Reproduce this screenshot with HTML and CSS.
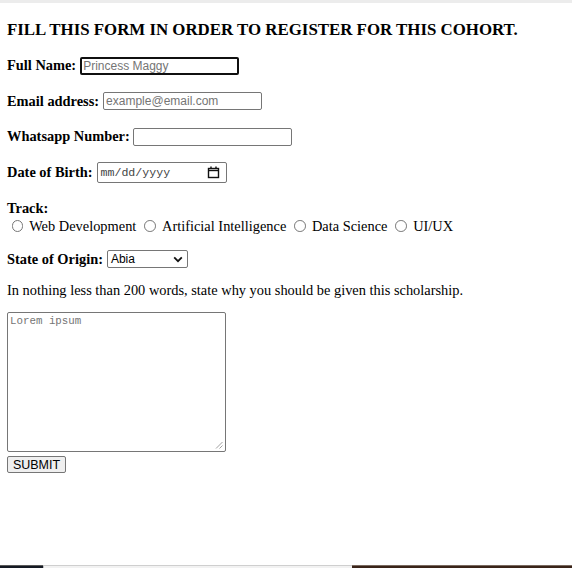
FILE: index.html
```html
<!DOCTYPE html>
<html lang="en">
<head>
<meta charset="utf-8">
<title>Cohort Registration</title>
<link rel="stylesheet" href="styles.css">
</head>
<body>
<div class="topbar"></div>
<main class="content">
  <h3 class="title">FILL THIS FORM IN ORDER TO REGISTER FOR THIS COHORT.</h3>
  <form class="form">
    <p class="row row-first"><label class="lbl" for="name">Full Name:</label> <input class="field field-focus" id="name" type="text" placeholder="Princess Maggy"></p>
    <p class="row"><label class="lbl" for="email">Email address:</label> <input class="field" id="email" type="email" placeholder="example@email.com"></p>
    <p class="row"><label class="lbl lbl-tight" for="phone">Whatsapp Number:</label> <input class="field" id="phone" type="tel"></p>
    <p class="row"><label class="lbl" for="dob">Date of Birth:</label> <span class="date"><span class="date-text">mm/dd/yyyy</span><svg class="cal" width="13" height="13" viewBox="0 0 13 13"><rect x="1.5" y="2.5" width="10" height="9" fill="none" stroke="#111" stroke-width="1.4"/><line x1="1.5" y1="4.5" x2="11.5" y2="4.5" stroke="#111" stroke-width="1.4"/><line x1="4" y1="0.5" x2="4" y2="2.5" stroke="#111" stroke-width="1.4"/><line x1="9" y1="0.5" x2="9" y2="2.5" stroke="#111" stroke-width="1.4"/></svg></span></p>
    <div class="track">
      <div class="lbl">Track:</div>
      <div class="radios">
        <label class="opt"><span class="radio"></span>Web Development</label>
        <label class="opt"><span class="radio"></span>Artificial Intelligence</label>
        <label class="opt"><span class="radio"></span>Data Science</label>
        <label class="opt"><span class="radio"></span>UI/UX</label>
      </div>
    </div>
    <p class="row"><label class="lbl" for="state">State of Origin:</label> <span class="select"><span class="select-text">Abia</span><svg class="chev" width="10" height="7" viewBox="0 0 10 7"><path d="M1.2 1.4 L5 5.2 L8.8 1.4" fill="none" stroke="#111" stroke-width="1.8"/></svg></span></p>
    <p class="row plain">In nothing less than 200 words, state why you should be given this scholarship.</p>
    <div class="area"><span class="area-ph">Lorem ipsum</span><svg class="grip" width="8" height="8" viewBox="0 0 8 8"><line x1="7.5" y1="1" x2="1" y2="7.5" stroke="#888" stroke-width="0.8"/><line x1="7.5" y1="4.5" x2="4.5" y2="7.5" stroke="#888" stroke-width="0.8"/></svg></div>
    <div class="actions"><span class="btn">SUBMIT</span></div>
  </form>
</main>
<div class="bottombar">
  <span class="seg seg-dark"></span>
  <span class="seg seg-light"></span>
  <span class="seg seg-brown"></span>
</div>
</body>
</html>
```
FILE: styles.css
```css
html, body { margin: 0; padding: 0; }
body {
  font-family: "Liberation Serif", "Times New Roman", serif;
  font-size: 14.4px;
  color: #000;
  background: #fff;
  display: flex;
  flex-direction: column;
  min-height: 568px;
}
.topbar { height: 3px; background: #ececec; flex: none; }
.content { flex: 1; padding: 0 7px; }
.title {
  font-size: 16.85px;
  font-weight: bold;
  margin: 17px 0 0;
  line-height: 19px;
}
.form { display: block; }
.row {
  margin: 14.4px 0 0;
  display: flex;
  align-items: center;
  min-height: 21px;
}
.row-first { margin-top: 16.4px; }
.row.plain { display: block; line-height: 17px; min-height: 0; margin-top: 12px; }
.lbl { font-weight: bold; margin-right: 4px; }
.lbl-tight { margin-right: 3px; }
.field {
  box-sizing: border-box;
  width: 159px;
  height: 18px;
  border: 1px solid #767676;
  border-radius: 2px;
  padding: 0 2px;
  font-family: "Liberation Sans", Arial, sans-serif;
  font-size: 12px;
  color: #000;
  background: #fff;
  outline: none;
}
.field::placeholder { color: #757575; }
.field-focus { border: 2px solid #101010; padding: 0 1px; }
.date {
  box-sizing: border-box;
  width: 130px;
  height: 21px;
  border: 1px solid #767676;
  border-radius: 2px;
  display: flex;
  align-items: center;
  justify-content: space-between;
  padding: 0 6px 0 3px;
}
.date-text { font-family: "Liberation Mono", monospace; font-size: 11.6px; color: #444; }
.cal { display: block; }
.track { margin-top: 17px; }
.track .lbl { line-height: 17px; }
.radios { display: flex; align-items: center; line-height: 17px; margin-top: 1px; }
.opt { display: inline-flex; align-items: center; margin-right: 3.5px; }
.radio {
  box-sizing: border-box;
  width: 11.7px;
  height: 11.7px;
  border: 1px solid #767676;
  border-radius: 50%;
  margin: 0 6px 0 4.5px;
  background: #fff;
}
.select {
  box-sizing: border-box;
  width: 81px;
  height: 18px;
  border: 1px solid #767676;
  border-radius: 2px;
  display: flex;
  align-items: center;
  justify-content: space-between;
  padding: 0 4px 0 3px;
}
.select-text { font-family: "Liberation Sans", Arial, sans-serif; font-size: 12px; }
.chev { display: block; }
.area {
  box-sizing: border-box;
  width: 219px;
  height: 140px;
  margin-top: 13px;
  border: 1px solid #767676;
  border-radius: 2px;
  padding: 2px 2px;
  display: flex;
  flex-direction: column;
  justify-content: space-between;
}
.area-ph { font-family: "Liberation Mono", monospace; font-size: 10.8px; color: #757575; line-height: 13px; }
.grip { align-self: flex-end; display: block; }
.actions { margin-top: 4px; }
.btn {
  box-sizing: border-box;
  display: inline-flex;
  align-items: center;
  justify-content: center;
  width: 59px;
  height: 17px;
  border: 1px solid #767676;
  border-radius: 2px;
  background: #efefef;
  font-family: "Liberation Sans", Arial, sans-serif;
  font-size: 12.5px;
  color: #000;
}
.bottombar { display: flex; height: 3px; flex: none; }
.seg { display: block; height: 3px; box-sizing: border-box; }
.seg-dark { width: 43px; background: #151a24; border-top: 1px solid #5a5a5a; }
.seg-light { width: 309px; background: #f2f2f2; border-top: 1px solid #cfcfcf; border-left: 1px solid #bdbdbd; }
.seg-brown { flex: 1; background: #3a2419; border-top: 1px solid #7a6a60; }
```
